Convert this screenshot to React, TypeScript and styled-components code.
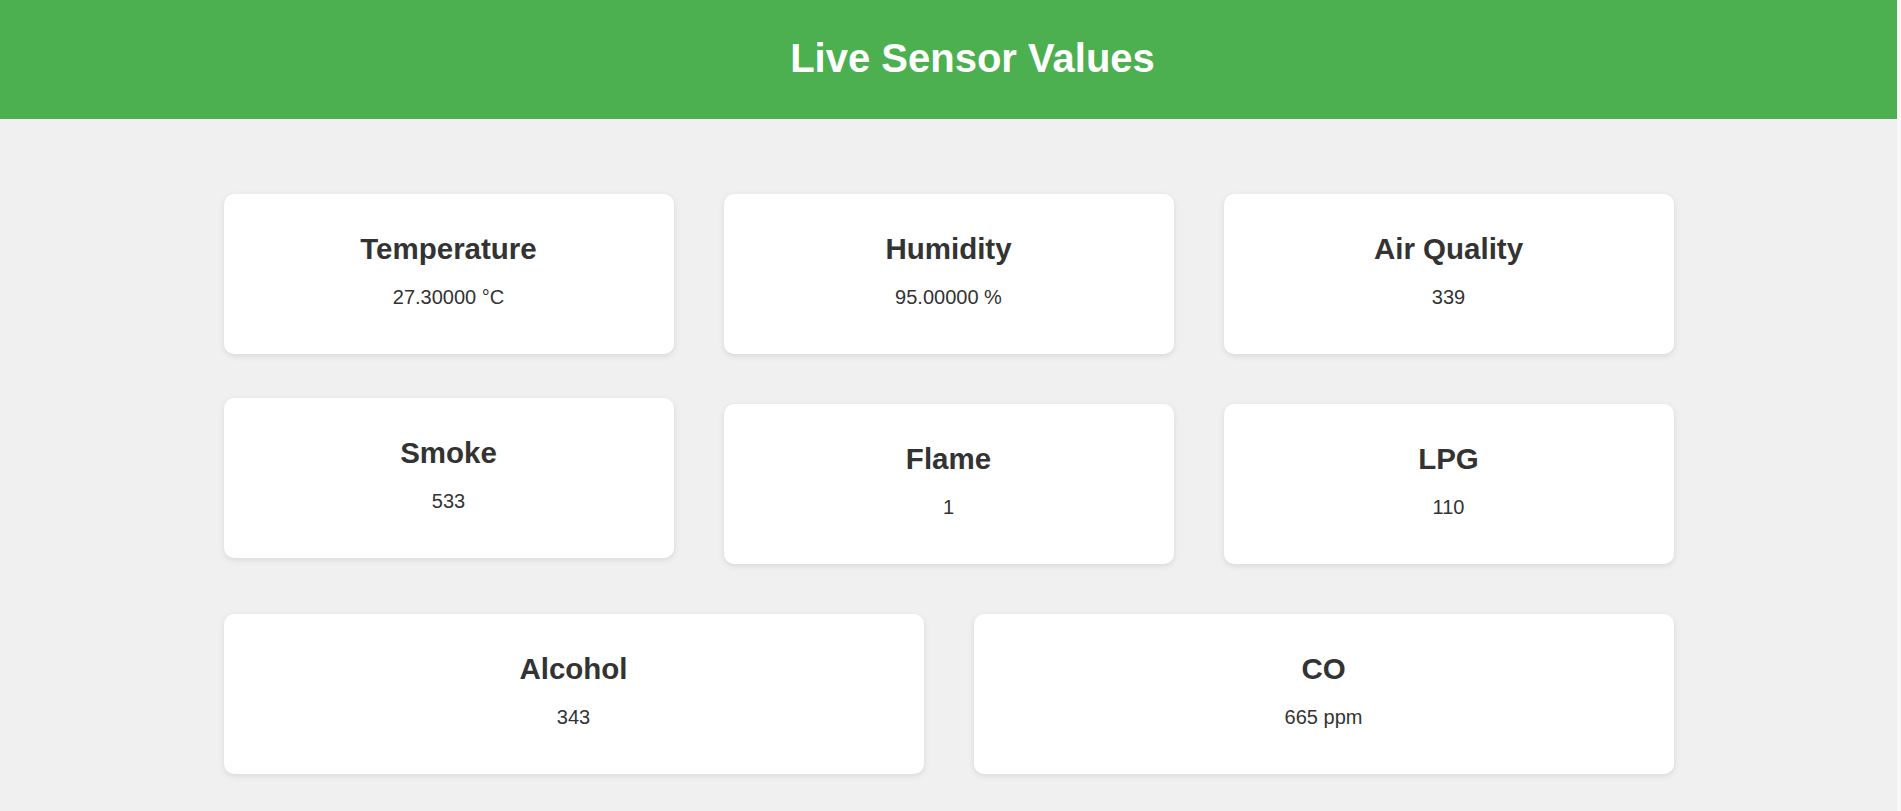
import React from "react";
import styled, { createGlobalStyle } from "styled-components";

const GlobalStyle = createGlobalStyle`
  html {
    background: #f8f8f8;
  }
  body {
    margin: 0 4px 0 0;
    min-height: 100vh;
    background: #f0f0f0;
    font-family: "Liberation Sans", Arial, Helvetica, sans-serif;
    color: #333;
  }
`;

const Header = styled.header`
  background: #4caf50;
  padding: 35px 0 38px 48px;
  text-align: center;
`;

const Title = styled.h1`
  margin: 0;
  font-size: 40px;
  line-height: 46px;
  font-weight: 700;
  color: #ffffff;
`;

const Main = styled.main`
  width: 1450px;
  margin: 0 auto;
  padding: 75px 0 37px;
  display: flex;
  flex-direction: column;
  gap: 50px;
`;

const Row = styled.section<{ $cols: number }>`
  display: grid;
  grid-template-columns: repeat(${(p) => p.$cols}, 1fr);
  gap: 50px;
`;

const Card = styled.div<{ $raised?: boolean }>`
  box-sizing: border-box;
  height: 160px;
  padding: 37px 20px 0;
  background: #ffffff;
  border-radius: 10px;
  box-shadow: 0 2px 6px rgba(0, 0, 0, 0.1);
  text-align: center;
  transform: ${(p) => (p.$raised ? "translateY(-6px)" : "none")};
`;

const CardTitle = styled.h2`
  margin: 0 0 20px;
  font-size: 29.5px;
  line-height: 35px;
  font-weight: 700;
  color: #333;
`;

const CardValue = styled.p`
  margin: 0;
  font-size: 20px;
  line-height: 23px;
  color: #333;
`;

type Sensor = { name: string; value: string; raised?: boolean };

const rows: Sensor[][] = [
  [
    { name: "Temperature", value: "27.30000 °C" },
    { name: "Humidity", value: "95.00000 %" },
    { name: "Air Quality", value: "339" },
  ],
  [
    { name: "Smoke", value: "533", raised: true },
    { name: "Flame", value: "1" },
    { name: "LPG", value: "110" },
  ],
  [
    { name: "Alcohol", value: "343" },
    { name: "CO", value: "665 ppm" },
  ],
];

export default function App() {
  return (
    <>
      <GlobalStyle />
      <Header>
        <Title>Live Sensor Values</Title>
      </Header>
      <Main>
        {rows.map((row, i) => (
          <Row key={i} $cols={row.length}>
            {row.map((s) => (
              <Card key={s.name} $raised={s.raised}>
                <CardTitle>{s.name}</CardTitle>
                <CardValue>{s.value}</CardValue>
              </Card>
            ))}
          </Row>
        ))}
      </Main>
    </>
  );
}
